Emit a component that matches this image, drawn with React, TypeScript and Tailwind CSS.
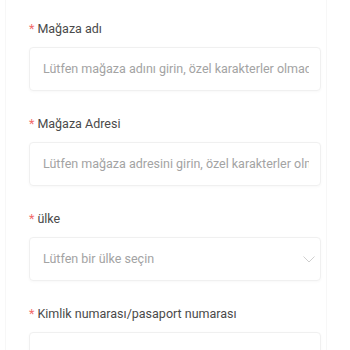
const fields = [
  { label: 'Mağaza adı', placeholder: 'Lütfen mağaza adını girin, özel karakterler olmadan' },
  { label: 'Mağaza Adresi', placeholder: 'Lütfen mağaza adresini girin, özel karakterler olmadan' },
  { label: 'ülke', placeholder: 'Lütfen bir ülke seçin', select: true },
  { label: 'Kimlik numarası/pasaport numarası', placeholder: '' },
];

export default function App() {
  return (
    <div className="h-[350px] w-[350px] overflow-hidden bg-white font-['Roboto',sans-serif]">
      <div className="ml-[5px] w-[322px] border-x border-[#f7f7f7] pl-[23px] pr-[5px] pt-[19px]">
        {fields.map((f) => (
          <div key={f.label} className="mb-[23px]">
            <div className="flex h-5 items-center text-[12.5px] text-[#4a4a4a]">
              <span className="mr-[3px] text-[#f26b6b]">*</span>
              {f.label}
            </div>
            <div className="mt-[8px] flex h-[44px] items-center rounded-[4px] border border-[#f0f0f0] pl-[13px] pr-[11px] shadow-[0_1px_3px_rgba(0,0,0,0.03)]">
              <span className="flex-1 overflow-hidden whitespace-nowrap text-[12.5px] text-[#a3a3a3]">
                {f.placeholder}
              </span>
              {f.select && (
                <svg width="12" height="7" viewBox="0 0 12 7" className="-mr-[6px] ml-2 text-[#cfcfcf]">
                  <polyline points="0.5,0.5 6,6 11.5,0.5" fill="none" stroke="currentColor" strokeWidth="1" />
                </svg>
              )}
            </div>
          </div>
        ))}
      </div>
    </div>
  );
}
